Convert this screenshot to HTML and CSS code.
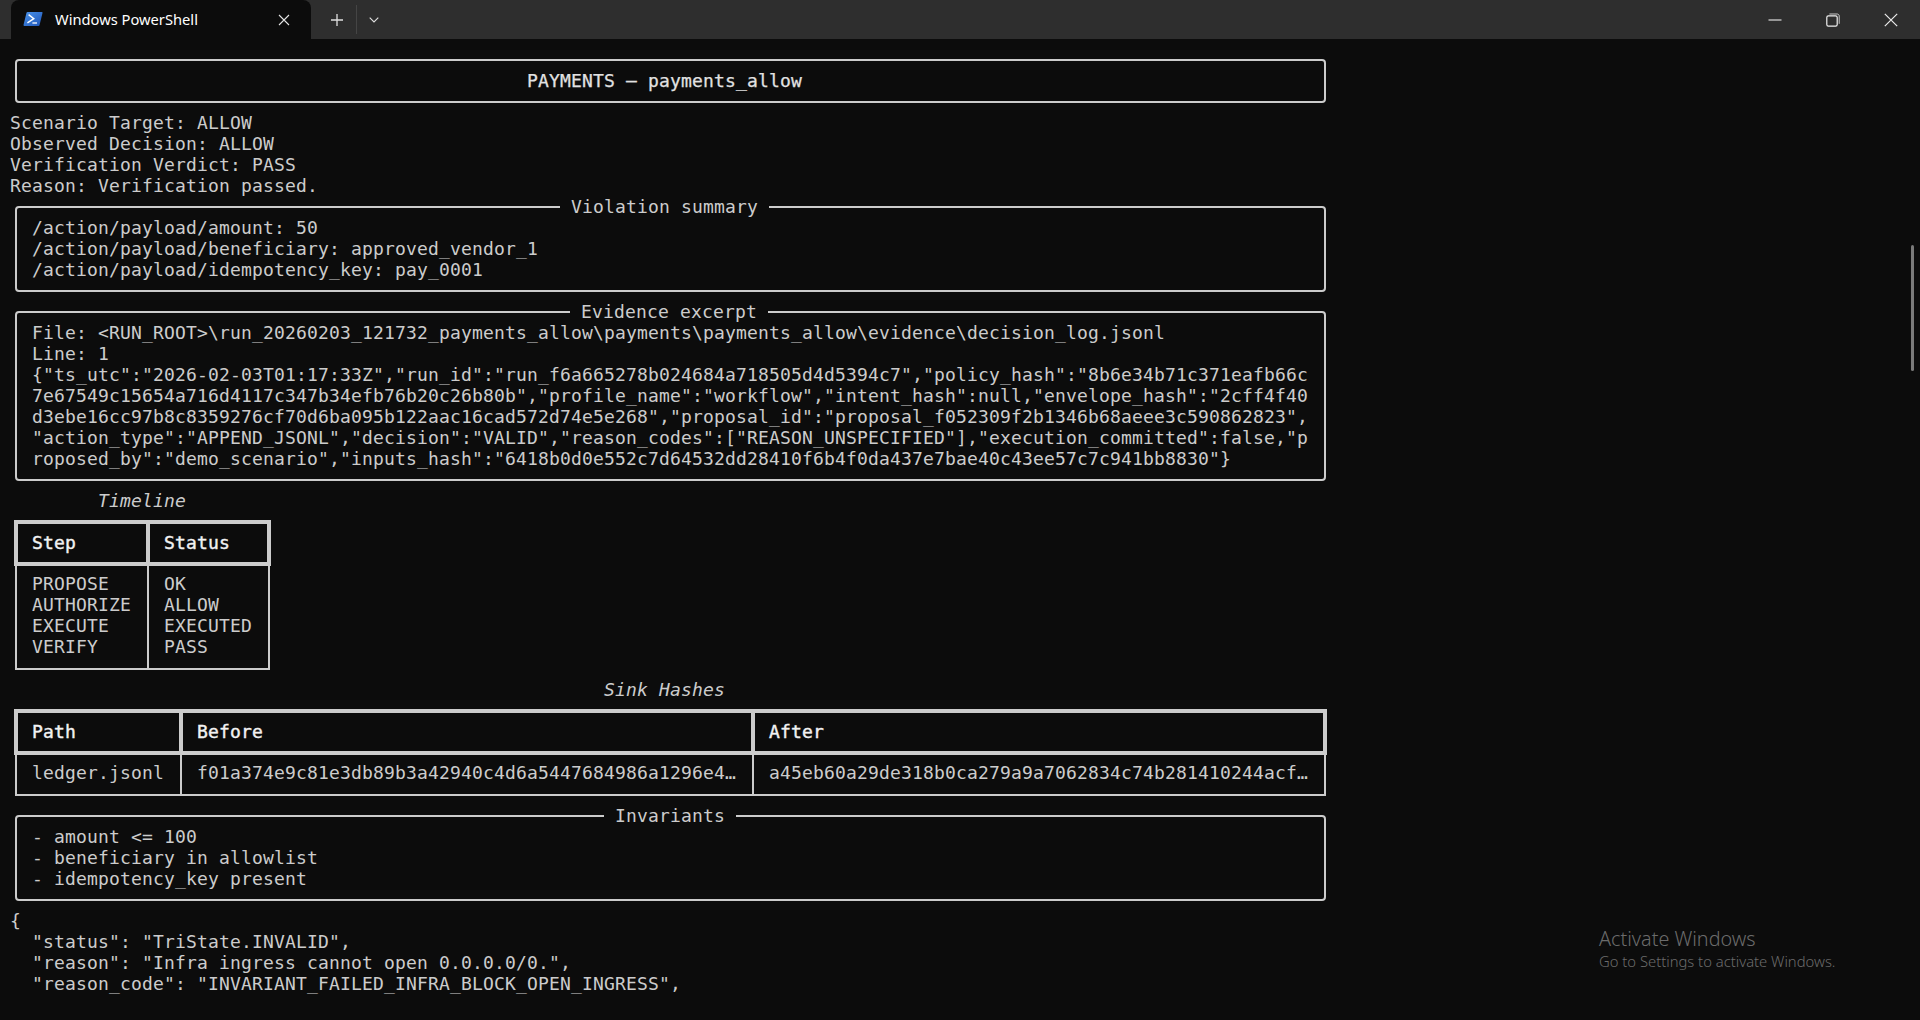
FILE: index.html
```html
<!DOCTYPE html>
<html lang="en">
<head>
<meta charset="utf-8">
<title>Windows PowerShell</title>
<link rel="stylesheet" href="styles.css">
</head>
<body>
<header class="tabbar">
  <div class="tab">
    <svg class="ps-icon" width="20" height="16" viewBox="0 0 20 16"><defs><linearGradient id="psg" x1="0" y1="0" x2="1" y2="1"><stop offset="0" stop-color="#4a93ea"/><stop offset="1" stop-color="#1f55b8"/></linearGradient></defs><path d="M4.6 1h14.2c.5 0 .8.4.7.9l-3 12.3c-.1.5-.5.8-1 .8H1.2c-.5 0-.8-.4-.7-.9l3-12.3c.1-.5.6-.8 1.1-.8z" fill="url(#psg)"/><path d="M5.6 3.6l5.2 4-6.4 4.2" fill="none" stroke="#fff" stroke-width="1.4"/><path d="M9.4 12h4.6" fill="none" stroke="#fff" stroke-width="1.3"/></svg>
    <span class="tab-title">Windows PowerShell</span>
    <svg class="tab-close" width="12" height="12" viewBox="0 0 12 12"><path d="M1 1l10 10M11 1L1 11" stroke="#e4e4e4" stroke-width="1.1" fill="none"/></svg>
  </div>
  <svg class="new-tab" width="14" height="14" viewBox="0 0 14 14"><path d="M7 1v12M1 7h12" stroke="#e0e0e0" stroke-width="1.3" fill="none"/></svg>
  <span class="tab-sep"></span>
  <svg class="tab-menu" width="10" height="6" viewBox="0 0 10 6"><path d="M.7.7L5 5l4.3-4.3" stroke="#e0e0e0" stroke-width="1.1" fill="none"/></svg>
  <div class="win-controls">
    <svg class="win-btn" width="14" height="14" viewBox="0 0 14 14"><path d="M.5 7h13" stroke="#dcdcdc" stroke-width="1.2" fill="none"/></svg>
    <svg class="win-btn" width="14" height="14" viewBox="0 0 14 14"><rect x=".8" y="2.8" width="10.4" height="10.4" rx="1.6" stroke="#f0f0f0" stroke-width="1.2" fill="none"/><path d="M3.4 1h7.8c1.2 0 2 .8 2 2v7.8" stroke="#c8c8c8" stroke-width="1" fill="none"/></svg>
    <svg class="win-btn" width="14" height="14" viewBox="0 0 14 14"><path d="M.8.8l12.4 12.4M13.2.8L.8 13.2" stroke="#ececec" stroke-width="1.2" fill="none"/></svg>
  </div>
</header>

<main class="term">
  <section class="panel"><div class="line heading">PAYMENTS — payments_allow</div></section>

  <div class="line">Scenario Target: ALLOW</div>
  <div class="line">Observed Decision: ALLOW</div>
  <div class="line">Verification Verdict: PASS</div>
  <div class="line">Reason: Verification passed.</div>

  <section class="panel">
    <h2 class="legend legend-violation">Violation summary</h2>
    <div class="line">/action/payload/amount: 50</div>
    <div class="line">/action/payload/beneficiary: approved_vendor_1</div>
    <div class="line">/action/payload/idempotency_key: pay_0001</div>
  </section>

  <section class="panel">
    <h2 class="legend legend-evidence">Evidence excerpt</h2>
    <div class="line">File: &lt;RUN_ROOT&gt;\run_20260203_121732_payments_allow\payments\payments_allow\evidence\decision_log.jsonl</div>
    <div class="line">Line: 1</div>
    <div class="line">{"ts_utc":"2026-02-03T01:17:33Z","run_id":"run_f6a665278b024684a718505d4d5394c7","policy_hash":"8b6e34b71c371eafb66c</div>
    <div class="line">7e67549c15654a716d4117c347b34efb76b20c26b80b","profile_name":"workflow","intent_hash":null,"envelope_hash":"2cff4f40</div>
    <div class="line">d3ebe16cc97b8c8359276cf70d6ba095b122aac16cad572d74e5e268","proposal_id":"proposal_f052309f2b1346b68aeee3c590862823",</div>
    <div class="line">"action_type":"APPEND_JSONL","decision":"VALID","reason_codes":["REASON_UNSPECIFIED"],"execution_committed":false,"p</div>
    <div class="line">roposed_by":"demo_scenario","inputs_hash":"6418b0d0e552c7d64532dd28410f6b4f0da437e7bae40c43ee57c7c941bb8830"}</div>
  </section>

  <div class="caption caption-timeline">Timeline</div>
  <div class="table table-timeline">
    <div class="thead">
      <div class="th w-step">Step</div>
      <div class="th w-status">Status</div>
    </div>
    <div class="tbody">
      <div class="td w-step-b">
        <div class="line">PROPOSE</div>
        <div class="line">AUTHORIZE</div>
        <div class="line">EXECUTE</div>
        <div class="line">VERIFY</div>
      </div>
      <div class="td w-status">
        <div class="line">OK</div>
        <div class="line">ALLOW</div>
        <div class="line">EXECUTED</div>
        <div class="line">PASS</div>
      </div>
    </div>
  </div>

  <div class="caption caption-sink">Sink Hashes</div>
  <div class="table table-sink">
    <div class="thead">
      <div class="th w-path">Path</div>
      <div class="th w-hash">Before</div>
      <div class="th w-hash">After</div>
    </div>
    <div class="tbody">
      <div class="td w-path-b"><div class="line">ledger.jsonl</div></div>
      <div class="td w-hash"><div class="line">f01a374e9c81e3db89b3a42940c4d6a5447684986a1296e4…</div></div>
      <div class="td w-hash"><div class="line">a45eb60a29de318b0ca279a9a7062834c74b281410244acf…</div></div>
    </div>
  </div>

  <section class="panel">
    <h2 class="legend legend-invariants">Invariants</h2>
    <div class="line">- amount &lt;= 100</div>
    <div class="line">- beneficiary in allowlist</div>
    <div class="line">- idempotency_key present</div>
  </section>

  <div class="line">{</div>
  <div class="line">  "status": "TriState.INVALID",</div>
  <div class="line">  "reason": "Infra ingress cannot open 0.0.0.0/0.",</div>
  <div class="line">  "reason_code": "INVARIANT_FAILED_INFRA_BLOCK_OPEN_INGRESS",</div>
</main>

<div class="scrollbar"></div>
<aside class="activate">
  <div class="activate-title">Activate Windows</div>
  <div class="activate-sub">Go to Settings to activate Windows.</div>
</aside>
</body>
</html>
```
FILE: styles.css
```css
* { box-sizing: border-box; }
html, body { margin: 0; height: 100%; }
body {
  background: #0c0c0c;
  color: #cccccc;
  overflow: hidden;
  position: relative;
}

/* Title bar */
.tabbar {
  height: 39px;
  background: #2e2e2e;
  display: flex;
  align-items: center;
  font-family: "Noto Sans", "Open Sans", sans-serif;
}
.tab {
  width: 300px;
  height: 39px;
  margin-left: 11px;
  background: #0c0c0c;
  border-radius: 8px 8px 0 0;
  display: flex;
  align-items: center;
  padding-left: 12px;
  flex: none;
}
.ps-icon { flex: none; margin-top: -1px; }
.tab-title {
  margin-left: 12px;
  margin-top: -2px;
  font-size: 14.7px;
  color: #ffffff;
  white-space: nowrap;
}
.tab-close { margin-left: auto; margin-right: 21px; }
.new-tab { margin-left: 19px; flex: none; }
.tab-sep { width: 1px; height: 29px; background: #454545; margin-left: 12px; flex: none; }
.tab-menu { margin-left: 12px; flex: none; }
.win-controls {
  margin-left: auto;
  margin-right: 22px;
  display: flex;
  gap: 44px;
}

/* Terminal grid: one cell is 11 x 21 */
.term {
  display: flex;
  flex-direction: column;
  align-items: flex-start;
  padding: 11px 0 0 10px;
  font-family: "DejaVu Sans Mono", "Liberation Mono", monospace;
  font-size: 18px;
  letter-spacing: 0.163px;
  line-height: 21px;
}
.line, .th, .caption, .legend { white-space: pre; }
.line { height: 21px; line-height: 20px; }
.panel {
  position: relative;
  width: 1311px;
  margin: 9px 0 10px 5px;
  padding: 10px 15px 9px;
  border: 2px solid #cccccc;
  border-radius: 4px;
}
.heading { padding-left: 495px; color: #e2e2e2; -webkit-text-stroke: 0.25px #e2e2e2; }
.legend {
  position: absolute;
  top: -12px;
  margin: 0;
  padding: 0 11px;
  background: #0c0c0c;
  font: inherit;
  letter-spacing: inherit;
}
.legend-violation { left: 543px; }
.legend-evidence { left: 553px; }
.legend-invariants { left: 587px; }

.caption { height: 21px; line-height: 20px; font-style: italic; }
.caption-timeline { padding-left: 88px; }
.caption-sink { padding-left: 594px; }

.table { margin: 8px 0 10px 4px; }
.table-timeline { width: 257px; }
.table-sink { width: 1313px; }
.thead {
  display: flex;
  border: 4px solid #cccccc;
  height: 46px;
  color: #f2f2f2;
  -webkit-text-stroke: 0.4px #f2f2f2;
}
.th { padding: 8px 0 0 14px; }
.th + .th { border-left: 4px solid #cccccc; }
.tbody {
  display: flex;
  margin: 0 1px;
  border: 2px solid #cccccc;
  border-top: 0;
}
.td { padding: 8px 0 10px 15px; }
.td + .td { border-left: 2px solid #cccccc; }
.w-step { width: 128px; }
.th.w-status { width: 121px; }
.w-step-b { width: 130px; }
.td.w-status { width: 121px; }
.w-path { width: 161px; }
.w-path-b { width: 163px; }
.w-hash { width: 572px; }

/* Overlays */
.scrollbar {
  position: absolute;
  left: 1911px;
  top: 245px;
  width: 3px;
  height: 126px;
  border-radius: 2px;
  background: #7a7a7a;
}
.activate {
  position: absolute;
  left: 1599px;
  top: 926px;
  font-family: "Noto Sans", "Open Sans", sans-serif;
  font-weight: 300;
  color: #6b6b6b;
}
.activate-title { font-size: 19.8px; line-height: 26px; }
.activate-sub { font-size: 14.8px; line-height: 19px; }
```
